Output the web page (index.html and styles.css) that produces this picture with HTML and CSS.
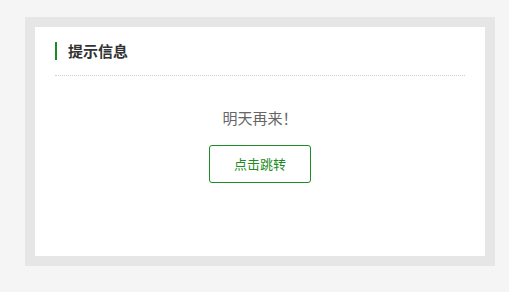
FILE: index.html
```html
<!DOCTYPE html>
<html lang="zh-CN">
<head>
<meta charset="utf-8">
<title>提示信息</title>
<link rel="stylesheet" href="styles.css">
</head>
<body>
<div class="frame">
  <div class="panel">
    <div class="panel-head">
      <h2 class="panel-title">提示信息</h2>
    </div>
    <div class="panel-body">
      <p class="message">明天再来！</p>
      <a class="btn" href="#">点击跳转</a>
    </div>
  </div>
</div>
</body>
</html>
```
FILE: styles.css
```css
html, body {
  margin: 0;
  padding: 0;
}
body {
  background: #f5f5f5;
  font-family: "Noto Sans CJK SC", "Microsoft YaHei", sans-serif;
  padding: 17px 0 0 25px;
}
.frame {
  width: 450px;
  border: 10px solid #e6e6e6;
  background: #fff;
}
.panel {
  height: 229px;
  box-sizing: border-box;
  padding: 15px 20px 0 20px;
}
.panel-head {
  padding-bottom: 15px;
  border-bottom: 1px dotted #cfcfcf;
}
.panel-title {
  margin: 0;
  height: 18px;
  line-height: 18px;
  font-size: 15px;
  font-weight: bold;
  color: #333;
  border-left: 2px solid #1f8b24;
  padding-left: 11px;
}
.panel-body {
  display: flex;
  flex-direction: column;
  align-items: center;
}
.message {
  margin: 32px 0 0 0;
  font-size: 15px;
  line-height: 20px;
  color: #666;
}
.btn {
  margin-top: 17px;
  width: 100px;
  height: 36px;
  line-height: 36px;
  border: 1px solid #1f8b24;
  border-radius: 3px;
  text-align: center;
  font-size: 13px;
  color: #1f8b24;
  text-decoration: none;
}
```
